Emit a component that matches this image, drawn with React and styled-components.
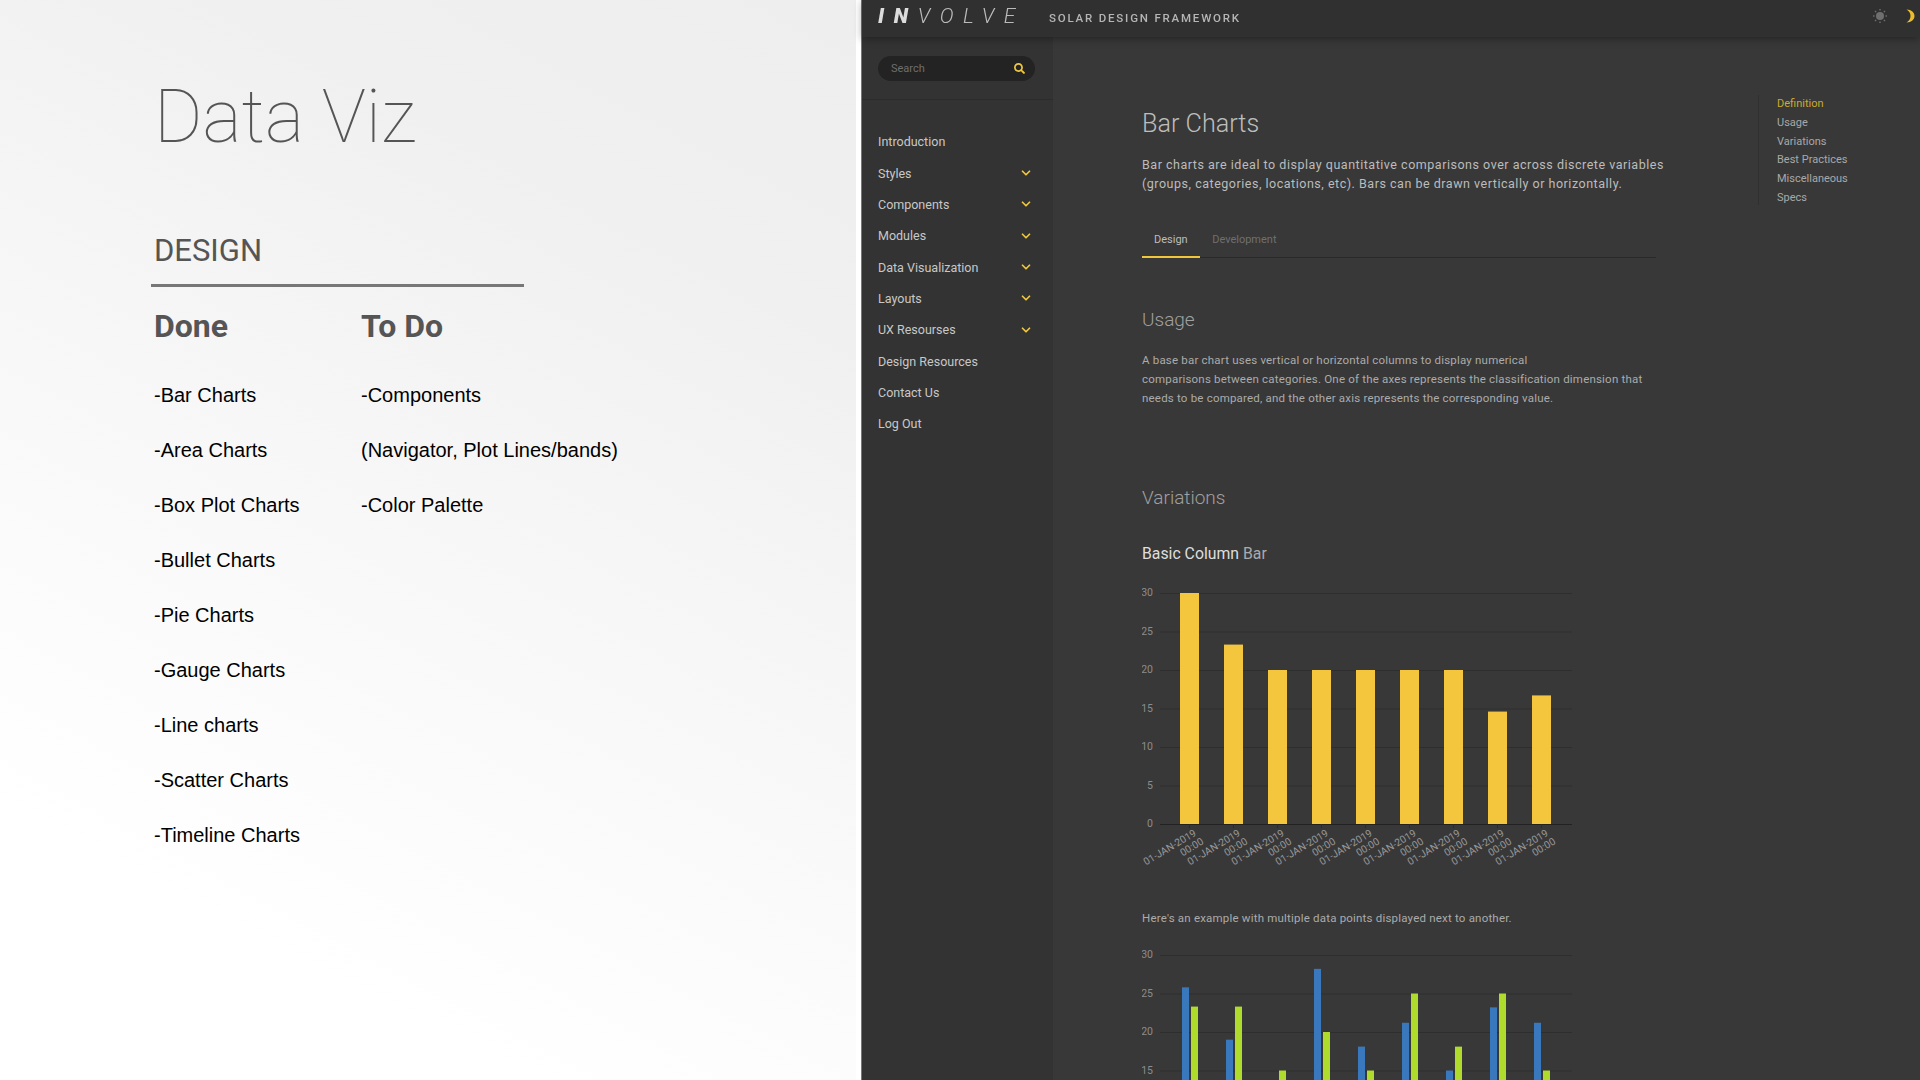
import React from "react";
import styled, { createGlobalStyle } from "styled-components";
import { FaSearch } from "react-icons/fa";
import { ChevronDown } from "lucide-react";

const GlobalStyle = createGlobalStyle`
  html, body {
    margin: 0;
    padding: 0;
    width: 1920px;
    height: 1080px;
    overflow: hidden;
    font-family: Roboto, "Liberation Sans", sans-serif;
  }
`;

const Page = styled.div`
  display: flex;
  width: 1920px;
  height: 1080px;
  overflow: hidden;
`;

/* left slide */
const Slide = styled.section`
  width: 861px;
  flex: none;
  box-sizing: border-box;
  padding: 72px 0 0 154px;
  background: linear-gradient(28deg, #ffffff 18%, #f8f8f8 48%, #f0f0f0 78%, #eeeeee 100%);
  border-right: 5px solid #ffffff;
`;

const SlideTitle = styled.h1`
  margin: 0;
  font-size: 74px;
  line-height: 90px;
  font-weight: 100;
  color: #555;
`;

const SlideSection = styled.h2`
  margin: 69px 0 0;
  font-size: 31px;
  line-height: 40px;
  font-weight: 400;
  color: #555;
`;

const SlideRule = styled.hr`
  margin: 13px 0 0 -3px;
  width: 373px;
  height: 2.5px;
  border: 0;
  background: #777;
`;

const Columns = styled.div`
  display: flex;
  margin-top: 18px;
`;

const Column = styled.div`
  width: ${(p) => p.$width}px;
`;

const ColumnTitle = styled.h3`
  margin: 0 0 21px;
  font-size: 32px;
  line-height: 42px;
  font-weight: 700;
  color: #555;
`;

const ColumnItem = styled.p`
  margin: 0;
  height: 55px;
  font-family: "Liberation Sans", Arial, sans-serif;
  font-size: 20px;
  line-height: 55px;
  color: #000;
`;

/* right app */
const AppPanel = styled.section`
  flex: 1;
  min-width: 0;
  display: flex;
  flex-direction: column;
  background: #383838;
  border-left: 1px solid #777;
  filter: blur(0.35px);
`;

const Header = styled.header`
  height: 37px;
  flex: none;
  display: flex;
  align-items: center;
  padding: 0 5px 0 16px;
  background: #303030;
  box-shadow: 0 2px 8px rgba(0, 0, 0, 0.35);
  position: relative;
  z-index: 1;
`;

const Logo = styled.div`
  margin-top: -5px;
  font-size: 21px;
  font-style: italic;
  letter-spacing: 9.6px;
  font-weight: 300;
  color: #bbb;
  b {
    font-weight: 900;
    color: #ddd;
  }
`;

const Tagline = styled.div`
  margin: -1px 0 0 24px;
  font-size: 11.5px;
  font-weight: 500;
  letter-spacing: 1.8px;
  color: #b5b5b5;
`;

const HeaderIcons = styled.div`
  margin: -5px 0 0 auto;
  display: flex;
  align-items: center;
  gap: 17px;
`;

const Body = styled.div`
  flex: 1;
  min-height: 0;
  display: flex;
`;

const Sidebar = styled.nav`
  width: 191px;
  flex: none;
  background: #333;
`;

const SearchArea = styled.div`
  height: 63px;
  box-sizing: border-box;
  padding: 19px 18px 0 16px;
  border-bottom: 1px solid #2c2c2c;
`;

const SearchBox = styled.div`
  height: 25px;
  display: flex;
  align-items: center;
  justify-content: space-between;
  padding: 0 10px 0 13px;
  border-radius: 13px;
  background: #232323;
  color: #6e6e6e;
  font-size: 11px;
  svg {
    color: #f0c63c;
    font-size: 11px;
  }
`;

const NavList = styled.ul`
  list-style: none;
  margin: 26px 0 0;
  padding: 0 18px 0 16px;
`;

const NavItem = styled.li`
  height: 31.35px;
  display: flex;
  align-items: center;
  justify-content: space-between;
  font-size: 12.5px;
  color: #c8c8c8;
  svg {
    color: #f0c63c;
    margin-right: 2px;
  }
`;

const Main = styled.main`
  flex: 1;
  min-width: 0;
  display: flex;
  padding: 0 0 0 89px;
  overflow: hidden;
`;

const Content = styled.div`
  width: 530px;
  flex: none;
`;

const PageTitle = styled.h1`
  margin: 71px 0 0;
  font-size: 25.2px;
  line-height: 32px;
  font-weight: 300;
  color: #bdbdbd;
`;

const Lead = styled.p`
  margin: 15px 0 0;
  font-size: 12.5px;
  line-height: 19px;
  letter-spacing: 0.52px;
  color: #bcbcbc;
`;

const Tabs = styled.div`
  display: flex;
  width: 514px;
  margin-top: 36.5px;
  border-bottom: 1px solid #2a2a2a;
`;

const Tab = styled.div`
  padding: 0 12.5px 0 12px;
  height: 28px;
  line-height: 20px;
  font-size: 11px;
  box-sizing: border-box;
  margin-bottom: -1px;
  color: ${(p) => (p.$active ? "#bdbdbd" : "#6f6f6f")};
  border-bottom: 2px solid ${(p) => (p.$active ? "#f0c63c" : "transparent")};
`;

const SectionTitle = styled.h2`
  margin: ${(p) => p.$top}px 0 0;
  font-size: 19px;
  line-height: 24px;
  font-weight: 300;
  color: #a0a0a0;
`;

const Para = styled.p`
  margin: ${(p) => p.$top}px 0 0;
  font-size: 11.5px;
  line-height: 19px;
  letter-spacing: 0.2px;
  color: #ababab;
`;

const ChartTitle = styled.h3`
  margin: 34px 0 0;
  font-size: 15.8px;
  line-height: 20px;
  font-weight: 400;
  color: #dedede;
  span {
    color: #aaa;
  }
`;

const ChartSvg = styled.svg`
  display: block;
  margin-top: ${(p) => p.$top}px;
  text {
    font-family: Roboto, sans-serif;
    font-size: 10.5px;
    fill: #8c8c8c;
  }
`;

const AxisDate = styled.text`
  && {
    font-size: 10.2px;
    fill: #999;
  }
`;

const Toc = styled.aside`
  margin: 58px 0 0 86px;
  height: 110px;
  padding-left: 18px;
  border-left: 1px solid #303030;
`;

const TocItem = styled.div`
  height: 18.8px;
  line-height: 18.8px;
  font-size: 11px;
  color: ${(p) => (p.$active ? "#cda92f" : "#a8a8a8")};
`;

const NAV = [
  ["Introduction", false],
  ["Styles", true],
  ["Components", true],
  ["Modules", true],
  ["Data Visualization", true],
  ["Layouts", true],
  ["UX Resourses", true],
  ["Design Resources", false],
  ["Contact Us", false],
  ["Log Out", false],
];

const DONE = [
  "-Bar Charts",
  "-Area Charts",
  "-Box Plot Charts",
  "-Bullet Charts",
  "-Pie Charts",
  "-Gauge Charts",
  "-Line charts",
  "-Scatter Charts",
  "-Timeline Charts",
];

const TODO = ["-Components", "(Navigator, Plot Lines/bands)", "-Color Palette"];

const TOC = ["Definition", "Usage", "Variations", "Best Practices", "Miscellaneous", "Specs"];

const YELLOW = "#f4c63d";
const BLUE = "#3a78bd";
const GREEN = "#aedb2c";

const SINGLE = [30, 23.3, 20, 20, 20, 20, 20, 14.6, 16.7];
const DOUBLE = [
  [25.8, 23.3],
  [19, 23.3],
  [0, 15],
  [28.2, 20],
  [18.1, 15],
  [21.2, 25],
  [15, 18.1],
  [23.2, 25],
  [21.2, 15],
];

// both charts share the axis: 0 at y=242, 30 at y=11
const SCALE = 231 / 30;
const y = (v) => 242 - v * SCALE;

const Grid = ({ ticks }) =>
  ticks.map((v) => (
    <g key={v}>
      <text x="11" y={y(v) + 3} textAnchor="end">
        {v}
      </text>
      <line
        x1="18"
        x2="430"
        y1={y(v) + 0.5}
        y2={y(v) + 0.5}
        stroke={v === 0 ? "#222" : "#2e2e2e"}
      />
    </g>
  ));

const SingleChart = () => (
  <ChartSvg $top={18} width="440" height="300" viewBox="0 0 440 300">
    <Grid ticks={[30, 25, 20, 15, 10, 5, 0]} />
    {SINGLE.map((v, i) => (
      <g key={i}>
        <rect x={38 + i * 44} y={y(v)} width="19" height={v * SCALE} fill={YELLOW} />
        <line x1={47.5 + i * 44} x2={47.5 + i * 44} y1="242" y2="246" stroke="#2a2a2a" />
        <g transform={`translate(${55 + i * 44} 253) rotate(-31)`}>
          <AxisDate textAnchor="end">01-JAN-2019</AxisDate>
          <AxisDate x="2" y="11" textAnchor="end">
            00:00
          </AxisDate>
        </g>
      </g>
    ))}
  </ChartSvg>
);

// the page ends just under the 15 line, so only the top of this chart shows
const DoubleChart = () => (
  <ChartSvg $top={16} width="440" height="136" viewBox="0 0 440 136">
    <Grid ticks={[30, 25, 20, 15]} />
    {DOUBLE.map(([a, b], i) => (
      <g key={i}>
        {a > 0 && <rect x={40 + i * 44} y={y(a)} width="7" height={a * SCALE} fill={BLUE} />}
        <rect x={49 + i * 44} y={y(b)} width="7" height={b * SCALE} fill={GREEN} />
      </g>
    ))}
  </ChartSvg>
);

const SunIcon = () => (
  <svg width="16" height="16" viewBox="0 0 16 16" fill="#6f6f6f">
    <circle cx="8" cy="8" r="4" />
    {[0, 45, 90, 135, 180, 225, 270, 315].map((a) => (
      <rect key={a} x="7.3" y="1" width="1.4" height="1.5" transform={`rotate(${a} 8 8)`} />
    ))}
  </svg>
);

const MoonIcon = () => (
  <svg width="10" height="14" viewBox="0 0 10 14">
    <path d="M1.5 0.5C6.5 0.6 9.5 3.5 9.5 7S6.5 13.4 1.5 13.5C4.5 11.5 5.5 9.5 5.5 7S4.5 2.5 1.5 0.5Z" fill="#e9bd2f" />
  </svg>
);

export default function App() {
  return (
    <Page>
      <GlobalStyle />
      <Slide>
        <SlideTitle>Data Viz</SlideTitle>
        <SlideSection>DESIGN</SlideSection>
        <SlideRule />
        <Columns>
          <Column $width={207}>
            <ColumnTitle>Done</ColumnTitle>
            {DONE.map((item) => (
              <ColumnItem key={item}>{item}</ColumnItem>
            ))}
          </Column>
          <Column $width={320}>
            <ColumnTitle>To Do</ColumnTitle>
            {TODO.map((item) => (
              <ColumnItem key={item}>{item}</ColumnItem>
            ))}
          </Column>
        </Columns>
      </Slide>

      <AppPanel>
        <Header>
          <Logo>
            <b>IN</b>VOLVE
          </Logo>
          <Tagline>SOLAR DESIGN FRAMEWORK</Tagline>
          <HeaderIcons>
            <SunIcon />
            <MoonIcon />
          </HeaderIcons>
        </Header>
        <Body>
          <Sidebar>
            <SearchArea>
              <SearchBox>
                Search
                <FaSearch />
              </SearchBox>
            </SearchArea>
            <NavList>
              {NAV.map(([label, more]) => (
                <NavItem key={label}>
                  {label}
                  {more && <ChevronDown size={14} strokeWidth={3} />}
                </NavItem>
              ))}
            </NavList>
          </Sidebar>
          <Main>
            <Content>
              <PageTitle>Bar Charts</PageTitle>
              <Lead>
                Bar charts are ideal to display quantitative comparisons over across discrete variables
                <br />
                (groups, categories, locations, etc). Bars can be drawn vertically or horizontally.
              </Lead>
              <Tabs>
                <Tab $active>Design</Tab>
                <Tab>Development</Tab>
              </Tabs>
              <SectionTitle $top={50}>Usage</SectionTitle>
              <Para $top={19}>
                A base bar chart uses vertical or horizontal columns to display numerical
                <br />
                comparisons between categories. One of the axes represents the classification dimension that
                <br />
                needs to be compared, and the other axis represents the corresponding value.
              </Para>
              <SectionTitle $top={78}>Variations</SectionTitle>
              <ChartTitle>
                Basic Column <span>Bar</span>
              </ChartTitle>
              <SingleChart />
              <Para $top={27}>Here's an example with multiple data points displayed next to another.</Para>
              <DoubleChart />
            </Content>
            <Toc>
              {TOC.map((item, i) => (
                <TocItem key={item} $active={i === 0}>
                  {item}
                </TocItem>
              ))}
            </Toc>
          </Main>
        </Body>
      </AppPanel>
    </Page>
  );
}
